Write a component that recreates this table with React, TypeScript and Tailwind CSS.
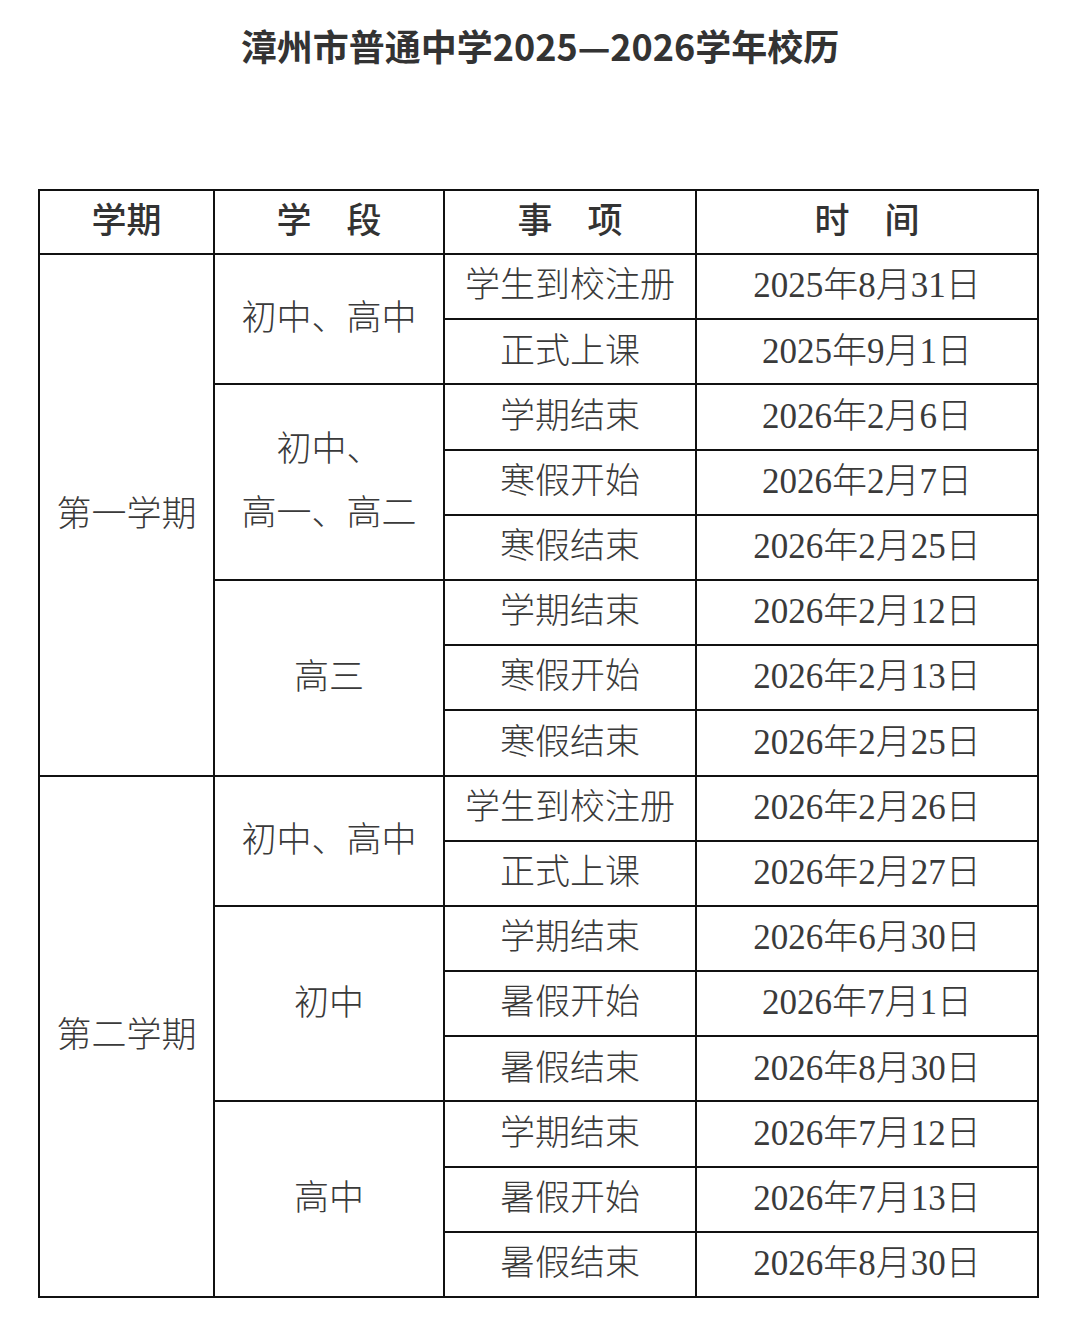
const cjk = "font-['Liberation_Serif','Noto_Sans_CJK_SC',serif]";

type Row = { term?: { label: string; span: number }; stage?: { label: string[]; span: number }; item: string; date: string };

const rows: Row[] = [
  { term: { label: "第一学期", span: 8 }, stage: { label: ["初中、高中"], span: 2 }, item: "学生到校注册", date: "2025年8月31日" },
  { item: "正式上课", date: "2025年9月1日" },
  { stage: { label: ["初中、", "高一、高二"], span: 3 }, item: "学期结束", date: "2026年2月6日" },
  { item: "寒假开始", date: "2026年2月7日" },
  { item: "寒假结束", date: "2026年2月25日" },
  { stage: { label: ["高三"], span: 3 }, item: "学期结束", date: "2026年2月12日" },
  { item: "寒假开始", date: "2026年2月13日" },
  { item: "寒假结束", date: "2026年2月25日" },
  { term: { label: "第二学期", span: 8 }, stage: { label: ["初中、高中"], span: 2 }, item: "学生到校注册", date: "2026年2月26日" },
  { item: "正式上课", date: "2026年2月27日" },
  { stage: { label: ["初中"], span: 3 }, item: "学期结束", date: "2026年6月30日" },
  { item: "暑假开始", date: "2026年7月1日" },
  { item: "暑假结束", date: "2026年8月30日" },
  { stage: { label: ["高中"], span: 3 }, item: "学期结束", date: "2026年7月12日" },
  { item: "暑假开始", date: "2026年7月13日" },
  { item: "暑假结束", date: "2026年8月30日" },
];

const cell = "border-2 border-[#111] text-center align-middle";

export default function App() {
  return (
    <div className="min-h-[1319px] w-[1080px] bg-white text-[#3a3a3a]">
      <h1 className="pt-[22px] text-center text-[36px] leading-[46px] font-bold text-[#333] font-['Noto_Sans_CJK_SC',sans-serif]">
        漳州市普通中学2025—2026学年校历
      </h1>
      <div className="mt-[121px] px-[38px]">
        <table className={`w-[999px] table-fixed border-collapse ${cjk} text-[35px] font-light`}>
          <colgroup>
            <col className="w-[175px]" />
            <col className="w-[230px]" />
            <col className="w-[252px]" />
            <col className="w-[342px]" />
          </colgroup>
          <thead>
            <tr className="h-[64px] text-[#333]">
              <th className={`${cell} font-medium`}>学期</th>
              <th className={`${cell} font-medium`}>学　段</th>
              <th className={`${cell} font-medium`}>事　项</th>
              <th className={`${cell} font-medium`}>时　间</th>
            </tr>
          </thead>
          <tbody>
            {rows.map((r, i) => (
              <tr key={i} className="h-[65.2px]">
                {r.term && (
                  <td rowSpan={r.term.span} className={cell}>
                    {r.term.label}
                  </td>
                )}
                {r.stage && (
                  <td rowSpan={r.stage.span} className={`${cell} leading-[64px]`}>
                    {r.stage.label.map((l) => (
                      <div key={l}>{l}</div>
                    ))}
                  </td>
                )}
                <td className={cell}>{r.item}</td>
                <td className={cell}>{r.date}</td>
              </tr>
            ))}
          </tbody>
        </table>
      </div>
    </div>
  );
}
